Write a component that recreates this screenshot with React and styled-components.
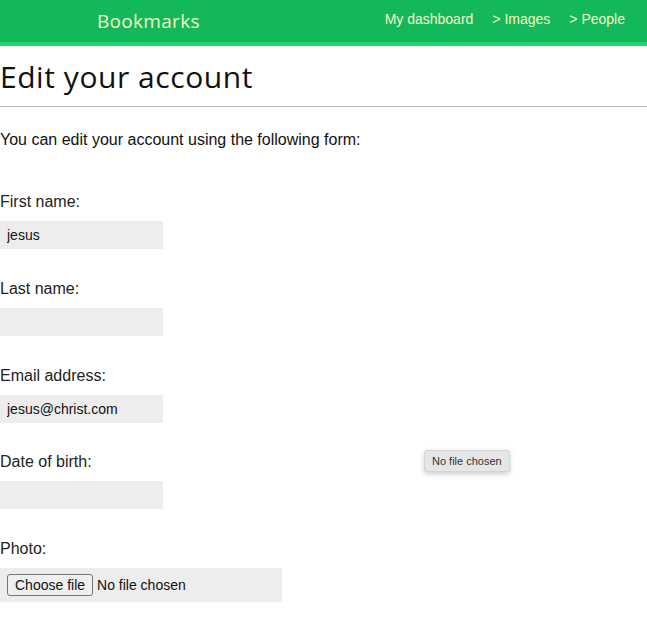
import React from 'react';
import styled, { createGlobalStyle } from 'styled-components';

const GlobalStyle = createGlobalStyle`
  body {
    margin: 0;
    background: #fff;
    font-family: "Liberation Sans", Arial, sans-serif;
    color: #222;
  }
`;

const Header = styled.header`
  height: 42px;
  background: #13b85b;
  border-bottom: 4px solid #1fd673;
  display: flex;
  align-items: center;
  justify-content: space-between;
  padding: 0 22px 0 97px;
`;

const Logo = styled.span`
  font-family: "Open Sans", "Lato", sans-serif;
  font-size: 19px;
  letter-spacing: 0.3px;
  color: #f7f5c4;
`;

const Nav = styled.nav`
  display: flex;
  gap: 19px;
  margin-top: -4px;
`;

const NavLink = styled.a`
  font-size: 14px;
  color: #f7f5c4;
  text-decoration: none;
`;

const Content = styled.main`
  position: relative;
`;

const Title = styled.h1`
  margin: 0;
  padding: 14px 0 12px;
  font-family: "Open Sans", "Lato", sans-serif;
  font-weight: 400;
  font-size: 30px;
  letter-spacing: 0.55px;
  line-height: 34px;
  color: #111;
  border-bottom: 1px solid #bbb;
`;

const Intro = styled.p`
  margin: 24px 0 44px;
  font-size: 16px;
  line-height: 18px;
  color: #111;
`;

const Field = styled.div`
  margin-bottom: 30.75px;
`;

const Label = styled.label`
  display: block;
  font-size: 16px;
  line-height: 18px;
  color: #222;
  margin-bottom: 10px;
`;

const Input = styled.input`
  display: block;
  box-sizing: border-box;
  width: 163px;
  height: 28px;
  border: none;
  background: #ededed;
  padding: 0 7px;
  font-family: "Liberation Sans", Arial, sans-serif;
  font-size: 14px;
  color: #111;
  outline: none;
`;

const FileBox = styled.div`
  box-sizing: border-box;
  width: 282px;
  height: 34px;
  background: #ededed;
  display: flex;
  align-items: center;
  padding-left: 7px;
  gap: 4px;
  font-size: 14px;
  color: #111;
`;

const FileButton = styled.button`
  height: 22px;
  padding: 0 7px;
  font-family: "Liberation Sans", Arial, sans-serif;
  font-size: 14px;
  color: #111;
  background: #efefef;
  border: 1px solid #767676;
  border-radius: 3px;
`;

const Tooltip = styled.div`
  position: absolute;
  left: 424px;
  top: 404px;
  height: 20px;
  padding: 0 7px;
  display: flex;
  align-items: center;
  font-size: 11px;
  color: #333;
  background: #e6e6e6;
  border: 1px solid #d4d4d4;
  border-radius: 3px;
  box-shadow: 0 2px 5px rgba(0, 0, 0, 0.2);
`;

const fields = [
  { label: 'First name:', value: 'jesus' },
  { label: 'Last name:', value: '' },
  { label: 'Email address:', value: 'jesus@christ.com' },
  { label: 'Date of birth:', value: '' },
];

export default function App() {
  return (
    <>
      <GlobalStyle />
      <Header>
        <Logo>Bookmarks</Logo>
        <Nav>
          <NavLink href="#">My dashboard</NavLink>
          <NavLink href="#">&gt; Images</NavLink>
          <NavLink href="#">&gt; People</NavLink>
        </Nav>
      </Header>
      <Content>
        <Title>Edit your account</Title>
        <Intro>You can edit your account using the following form:</Intro>
        {fields.map((f) => (
          <Field key={f.label}>
            <Label>{f.label}</Label>
            <Input defaultValue={f.value} />
          </Field>
        ))}
        <Field>
          <Label>Photo:</Label>
          <FileBox>
            <FileButton>Choose file</FileButton>
            <span>No file chosen</span>
          </FileBox>
        </Field>
        <Tooltip>No file chosen</Tooltip>
      </Content>
    </>
  );
}
